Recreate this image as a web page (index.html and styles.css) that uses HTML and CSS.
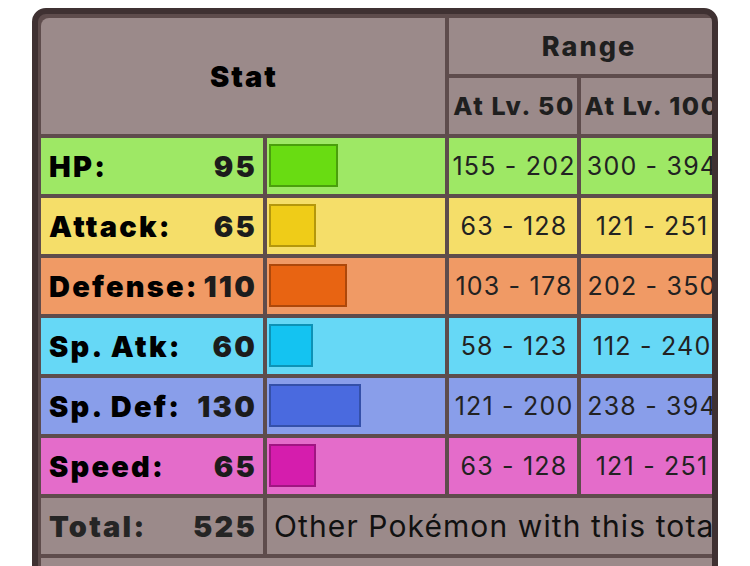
FILE: index.html
```html
<!DOCTYPE html>
<html lang="en">
<head>
<meta charset="utf-8">
<title>Base stats</title>
<link rel="stylesheet" href="styles.css">
</head>
<body>
<div class="frame">
  <div class="stats">
    <div class="cell head stat-head">Stat</div>
    <div class="cell head range-head">Range</div>
    <div class="cell head lv">At Lv. 50</div>
    <div class="cell head lv">At Lv. 100</div>

    <div class="cell name hp"><span class="label">HP:</span><span class="num">95</span></div>
    <div class="cell bar-cell hp"><div class="bar bar-hp" style="width:69px"></div></div>
    <div class="cell range hp">155 - 202</div>
    <div class="cell range hp">300 - 394</div>

    <div class="cell name atk"><span class="label">Attack:</span><span class="num">65</span></div>
    <div class="cell bar-cell atk"><div class="bar bar-atk" style="width:47px"></div></div>
    <div class="cell range atk">63 - 128</div>
    <div class="cell range atk">121 - 251</div>

    <div class="cell name def"><span class="label">Defense:</span><span class="num">110</span></div>
    <div class="cell bar-cell def"><div class="bar bar-def" style="width:78px"></div></div>
    <div class="cell range def">103 - 178</div>
    <div class="cell range def">202 - 350</div>

    <div class="cell name spa"><span class="label">Sp. Atk:</span><span class="num">60</span></div>
    <div class="cell bar-cell spa"><div class="bar bar-spa" style="width:44px"></div></div>
    <div class="cell range spa">58 - 123</div>
    <div class="cell range spa">112 - 240</div>

    <div class="cell name spd"><span class="label">Sp. Def:</span><span class="num">130</span></div>
    <div class="cell bar-cell spd"><div class="bar bar-spd" style="width:92px"></div></div>
    <div class="cell range spd">121 - 200</div>
    <div class="cell range spd">238 - 394</div>

    <div class="cell name spe"><span class="label">Speed:</span><span class="num">65</span></div>
    <div class="cell bar-cell spe"><div class="bar bar-spe" style="width:47px"></div></div>
    <div class="cell range spe">63 - 128</div>
    <div class="cell range spe">121 - 251</div>

    <div class="cell name total"><span class="label">Total:</span><span class="num">525</span></div>
    <div class="cell note total">Other Pokémon with this total</div>

    <div class="cell footer"></div>
  </div>
</div>
</body>
</html>
```

FILE: styles.css
```css
html, body {
  margin: 0;
  padding: 0;
  background: #ffffff;
  overflow: hidden;
  height: 566px;
}

body {
  font-family: Inter, "Noto Sans", sans-serif;
}

.frame {
  margin: 8px 0 0 32px;
  width: 674px;
  height: 620px;
  border: 6px solid #3f3132;
  border-radius: 14px;
  background: #5e4c4c;
  overflow: hidden;
}

.stats {
  display: grid;
  grid-template-columns: 222px 178px 128px 140px;
  grid-auto-rows: 56px;
  gap: 4px;
  padding: 4px 0 0 3px;
}

.cell {
  display: flex;
  align-items: center;
  white-space: nowrap;
  overflow: hidden;
}

.head {
  background: #9b8a8a;
  justify-content: center;
  font-weight: 800;
  color: #1f1f1f;
}

.stat-head {
  grid-column: 1 / 3;
  grid-row: 1 / 3;
  font-size: 29px;
  font-weight: 900;
  letter-spacing: 2px;
  padding-left: 2px;
  color: #000;
  border-top-left-radius: 8px;
}

.range-head {
  grid-column: 3 / 5;
  font-size: 27px;
  letter-spacing: 2px;
  padding-left: 8px;
}

.lv {
  font-size: 25px;
  letter-spacing: 1.6px;
  padding-left: 2px;
}

.name {
  justify-content: space-between;
  padding: 0 6px 0 8px;
  font-size: 29px;
  font-weight: 900;
  letter-spacing: 2.2px;
}

.name .label {
  color: #000;
}

.name .num {
  color: #1c1c1c;
}

.bar-cell {
  padding: 0 2px;
}

.bar {
  height: 43px;
  box-sizing: border-box;
  border: 2px solid;
  margin-top: -1px;
}

.range {
  justify-content: center;
  font-size: 25px;
  letter-spacing: 1.2px;
  padding-left: 2px;
  color: #222;
}

.hp { background: #9ee865; }
.atk { background: #f5de69; }
.def { background: #f09a65; }
.spa { background: #66d8f6; }
.spd { background: #899eea; }
.spe { background: #e46cca; }

.bar-hp { background: #69dc12; border-color: #4a9f0c; }
.bar-atk { background: #efcc18; border-color: #b4970c; }
.bar-def { background: #e86412; border-color: #ad480a; }
.bar-spa { background: #14c3f1; border-color: #0d92b6; }
.bar-spd { background: #4a6adf; border-color: #3450a9; }
.bar-spe { background: #d51dad; border-color: #a01582; }

.total {
  background: #9b8a8a;
}

.total .label,
.total .num {
  color: #252525;
}

.note {
  grid-column: 2 / 5;
  padding-left: 7px;
  font-size: 30px;
  letter-spacing: 1.1px;
  color: #111;
}

.footer {
  grid-column: 1 / 5;
  background: #9b8a8a;
}
```
